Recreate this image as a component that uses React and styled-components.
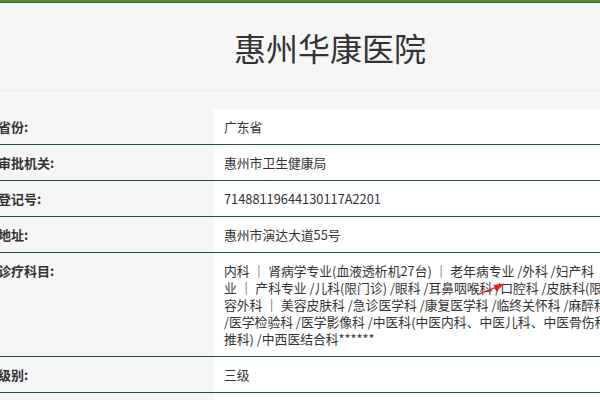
import React from "react";
import styled, { createGlobalStyle } from "styled-components";

const GlobalStyle = createGlobalStyle`
  html, body {
    margin: 0;
    padding: 0;
    background: #f6f6f6;
    overflow: hidden;
  }
  body {
    font-family: "Noto Sans CJK SC", "Noto Sans", sans-serif;
    color: #333;
  }
`;

const TopBar = styled.div`
  height: 2px;
  background: #4e8d3c;
  border-bottom: 1px solid #3a6f2e;
`;

const Page = styled.div`
  margin-left: -12px;
  width: 680px;
`;

const Header = styled.div`
  height: 87px;
  display: flex;
  align-items: center;
  justify-content: center;
  border-bottom: 1px solid #ececec;
`;

const Title = styled.h1`
  margin: 0 0 0 4px;
  font-size: 32px;
  font-weight: 400;
  color: #333;
`;

const Table = styled.div`
  margin-top: 18px;
`;

const Row = styled.div`
  display: grid;
  grid-template-columns: 226px 1fr;
  border-bottom: 1px solid #22573a;
`;

const Label = styled.div`
  padding: 9px 10px;
  font-size: 13px;
  line-height: 17px;
  font-weight: 700;
  color: #333;
  background: #f6f6f6;
`;

const Value = styled.div`
  position: relative;
  padding: 9px 10px;
  font-size: 12.8px;
  line-height: 17px;
  color: #333;
  background: #fff;
  white-space: nowrap;
  overflow: hidden;
`;

const Line = styled.div``;

const Pipe = styled.span`
  font-weight: 700;
  color: #444;
`;

const Arrow = styled.svg`
  position: absolute;
  left: 263px;
  top: 30px;
`;

const rows = [
  { label: "省份:", value: "广东省" },
  { label: "审批机关:", value: "惠州市卫生健康局" },
  { label: "登记号:", value: "71488119644130117A2201" },
  { label: "地址:", value: "惠州市演达大道55号" },
];

const departments = [
  "内科 ｜ 肾病学专业(血液透析机27台) ｜ 老年病专业 /外科 /妇产科 ｜ 妇科专",
  "业 ｜ 产科专业 /儿科(限门诊) /眼科 /耳鼻咽喉科 /口腔科 /皮肤科(限门诊) /医疗美",
  "容外科 ｜ 美容皮肤科 /急诊医学科 /康复医学科 /临终关怀科 /麻醉科",
  "/医学检验科 /医学影像科 /中医科(中医内科、中医儿科、中医骨伤科、中医推拿",
  "推科) /中西医结合科******",
];

const renderLine = (text) =>
  text.split("｜").map((part, i) => (
    <React.Fragment key={i}>
      {i > 0 && <Pipe>｜</Pipe>}
      {part}
    </React.Fragment>
  ));

export default function App() {
  return (
    <>
      <GlobalStyle />
      <TopBar />
      <Page>
        <Header>
          <Title>惠州华康医院</Title>
        </Header>
        <Table>
          {rows.map((r) => (
            <Row key={r.label}>
              <Label>{r.label}</Label>
              <Value>{r.value}</Value>
            </Row>
          ))}
          <Row>
            <Label>诊疗科目:</Label>
            <Value>
              {departments.map((l, i) => (
                <Line key={i}>{renderLine(l)}</Line>
              ))}
              <Arrow width="28" height="13" viewBox="0 0 28 13">
                <polygon
                  points="0,12.5 17.5,5.5 19.5,8.5 27.5,0.5 16,2 17.8,4 0.5,11"
                  fill="#e2231a"
                />
              </Arrow>
            </Value>
          </Row>
          <Row>
            <Label>级别:</Label>
            <Value>三级</Value>
          </Row>
          <Row>
            <Label>类型:</Label>
            <Value>综合医院</Value>
          </Row>
        </Table>
      </Page>
    </>
  );
}
